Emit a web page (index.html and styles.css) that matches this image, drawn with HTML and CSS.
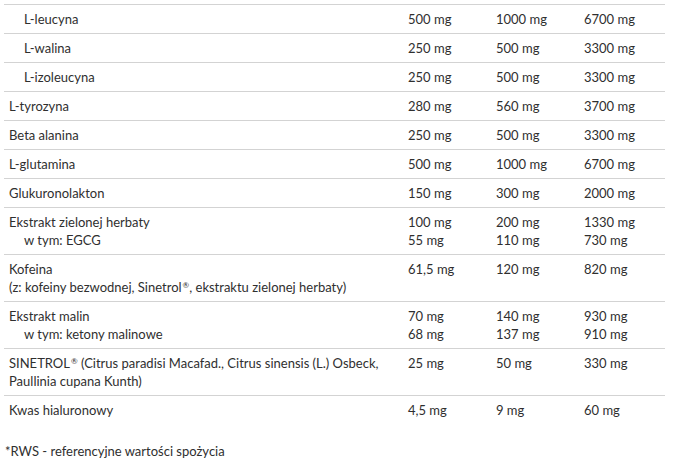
FILE: index.html
```html
<!DOCTYPE html>
<html lang="pl">
<head>
<meta charset="utf-8">
<link rel="stylesheet" href="styles.css">
</head>
<body>
<table class="nutri">
  <colgroup>
    <col class="c-name"><col class="c-val"><col class="c-val"><col class="c-last">
  </colgroup>
  <tbody>
    <tr><td class="sub">L-leucyna</td><td>500 mg</td><td>1000 mg</td><td>6700 mg</td></tr>
    <tr><td class="sub">L-walina</td><td>250 mg</td><td>500 mg</td><td>3300 mg</td></tr>
    <tr><td class="sub">L-izoleucyna</td><td>250 mg</td><td>500 mg</td><td>3300 mg</td></tr>
    <tr><td>L-tyrozyna</td><td>280 mg</td><td>560 mg</td><td>3700 mg</td></tr>
    <tr><td>Beta alanina</td><td>250 mg</td><td>500 mg</td><td>3300 mg</td></tr>
    <tr><td>L-glutamina</td><td>500 mg</td><td>1000 mg</td><td>6700 mg</td></tr>
    <tr><td>Glukuronolakton</td><td>150 mg</td><td>300 mg</td><td>2000 mg</td></tr>
    <tr><td>Ekstrakt zielonej herbaty<br><span class="ind">w tym: EGCG</span></td><td>100 mg<br>55 mg</td><td>200 mg<br>110 mg</td><td>1330 mg<br>730 mg</td></tr>
    <tr><td>Kofeina<br>(z: kofeiny bezwodnej, Sinetrol<sup>®</sup>, ekstraktu zielonej herbaty)</td><td>61,5 mg</td><td>120 mg</td><td>820 mg</td></tr>
    <tr><td>Ekstrakt malin<br><span class="ind">w tym: ketony malinowe</span></td><td>70 mg<br>68 mg</td><td>140 mg<br>137 mg</td><td>930 mg<br>910 mg</td></tr>
    <tr><td>SINETROL<sup>®</sup> (Citrus paradisi Macafad., Citrus sinensis (L.) Osbeck, Paullinia cupana Kunth)</td><td>25 mg</td><td>50 mg</td><td>330 mg</td></tr>
    <tr class="last"><td>Kwas hialuronowy</td><td>4,5 mg</td><td>9 mg</td><td>60 mg</td></tr>
  </tbody>
</table>
<p class="note">*RWS - referencyjne wartości spożycia</p>
</body>
</html>
```
FILE: styles.css
```css
html, body {
  margin: 0;
  background: #fff;
}
body {
  padding: 4px 10px 0 4px;
  font-family: "Lato", "Liberation Sans", sans-serif;
  font-size: 13px;
  line-height: 18px;
  color: #2f2f2f;
}
.nutri {
  width: 661px;
  border-collapse: collapse;
  table-layout: fixed;
}
.c-name { width: 399px; }
.c-val { width: 88px; }
.c-last { width: 86px; }
.nutri td {
  border-top: 1px solid #d3d3d3;
  padding: 5px 5px;
  vertical-align: top;
  text-align: left;
}
.nutri td.sub {
  padding-left: 20px;
}
.ind {
  padding-left: 15px;
}
.nutri sup {
  font-size: 8px;
  line-height: 0;
  vertical-align: 4px;
  margin-left: 1px;
}
.note {
  margin: 18px 0 0 1px;
}
```
